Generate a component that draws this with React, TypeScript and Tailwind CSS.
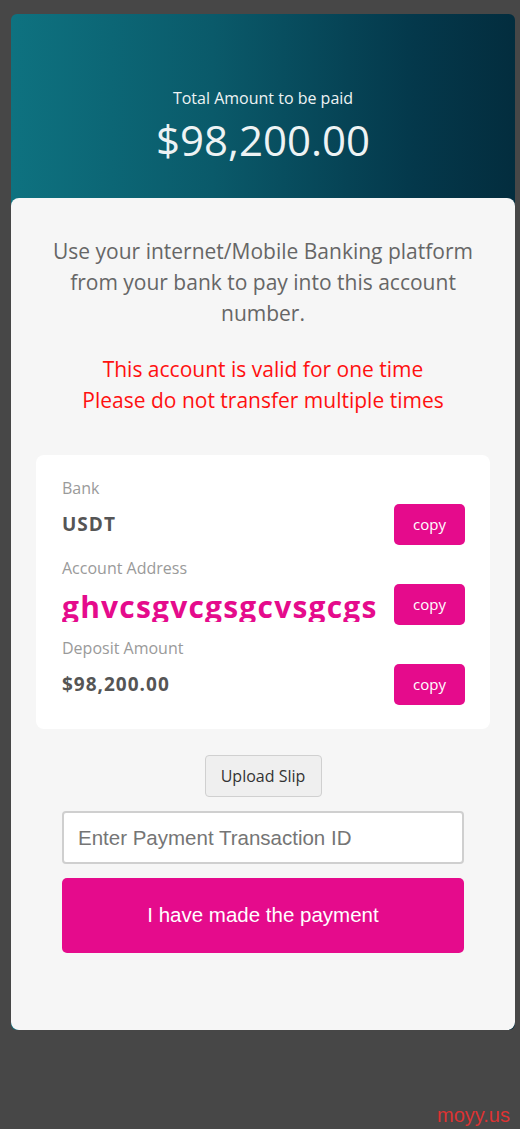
import React from "react";

const sans = { fontFamily: '"Open Sans", "Noto Sans", sans-serif' };
const arial = { fontFamily: '"Liberation Sans", Arial, sans-serif' };

function Row({ label, children }: { label: string; children: React.ReactNode }) {
  return (
    <div className="flex flex-col">
      <div className="text-[16px] leading-[20px] text-[#9a9a9a]">{label}</div>
      <div className="mt-[6px] flex h-[41px] items-center justify-between">
        {children}
        <button className="h-[41px] w-[71px] shrink-0 rounded-[5px] bg-[#e50b8c] text-[15px] text-white">copy</button>
      </div>
    </div>
  );
}

export default function App() {
  return (
    <div className="flex min-h-[1129px] flex-col bg-[#474747]" style={sans}>
      <div className="ml-[11px] mr-[5px] mt-[14px] overflow-hidden rounded-[6px] bg-[linear-gradient(to_right,#0e7280,#0a5a6a_40%,#04384b_80%,#032d3e)]">
        <div className="flex h-[184px] flex-col items-center pt-[74px] text-[#eef3f4]">
          <div className="text-[16px] leading-[20px]">Total Amount to be paid</div>
          <div className="mt-[8px] text-[42px] leading-[48px]">$98,200.00</div>
        </div>
        <div className="flex h-[832px] flex-col rounded-[8px] bg-[#f6f6f6] px-[25px] pt-[38px]">
          <p className="px-[10px] text-center text-[21px] leading-[31px] text-[#666]">
            Use your internet/Mobile Banking platform from your bank to pay into this account number.
          </p>
          <p className="mt-[25px] text-center text-[21px] leading-[31px] text-[#ff1010]">
            This account is valid for one time
            <br />
            Please do not transfer multiple times
          </p>
          <div className="mt-[39px] flex flex-col gap-[13px] rounded-[8px] bg-white pb-[24px] pl-[26px] pr-[25px] pt-[23px]">
            <Row label="Bank">
              <div className="text-[19px] font-bold tracking-[1px] text-[#555]">USDT</div>
            </Row>
            <Row label="Account Address">
              <div className="mt-[4px] h-[30px] overflow-hidden text-[30px] font-bold leading-[30px] tracking-[1.2px] text-[#e50b8c]">
                ghvcsgvcgsgcvsgcgs
              </div>
            </Row>
            <Row label="Deposit Amount">
              <div className="text-[19px] font-bold tracking-[1px] text-[#555]">$98,200.00</div>
            </Row>
          </div>
          <div className="mt-[26px] flex justify-center">
            <button className="h-[42px] w-[117px] rounded-[4px] border border-[#d0d0d0] bg-[#efefef] text-[16px] text-[#333]">
              Upload Slip
            </button>
          </div>
          <div className="mx-[26px] mt-[14px] flex flex-col gap-[14px]">
            <input
              className="h-[53px] w-full rounded-[4px] border-2 border-[#cfcfcf] bg-white px-[14px] text-[20.5px] text-[#333] outline-none placeholder:text-[#757575]"
              style={arial}
              placeholder="Enter Payment Transaction ID"
            />
            <button className="h-[75px] w-full rounded-[5px] bg-[#e50b8c] text-[20.5px] text-white" style={arial}>
              I have made the payment
            </button>
          </div>
        </div>
      </div>
      <div className="mt-auto flex justify-end pb-[2px] pr-[10px]">
        <span className="text-[20px] leading-[23px] text-[#dc3333]" style={arial}>
          moyy.us
        </span>
      </div>
    </div>
  );
}
